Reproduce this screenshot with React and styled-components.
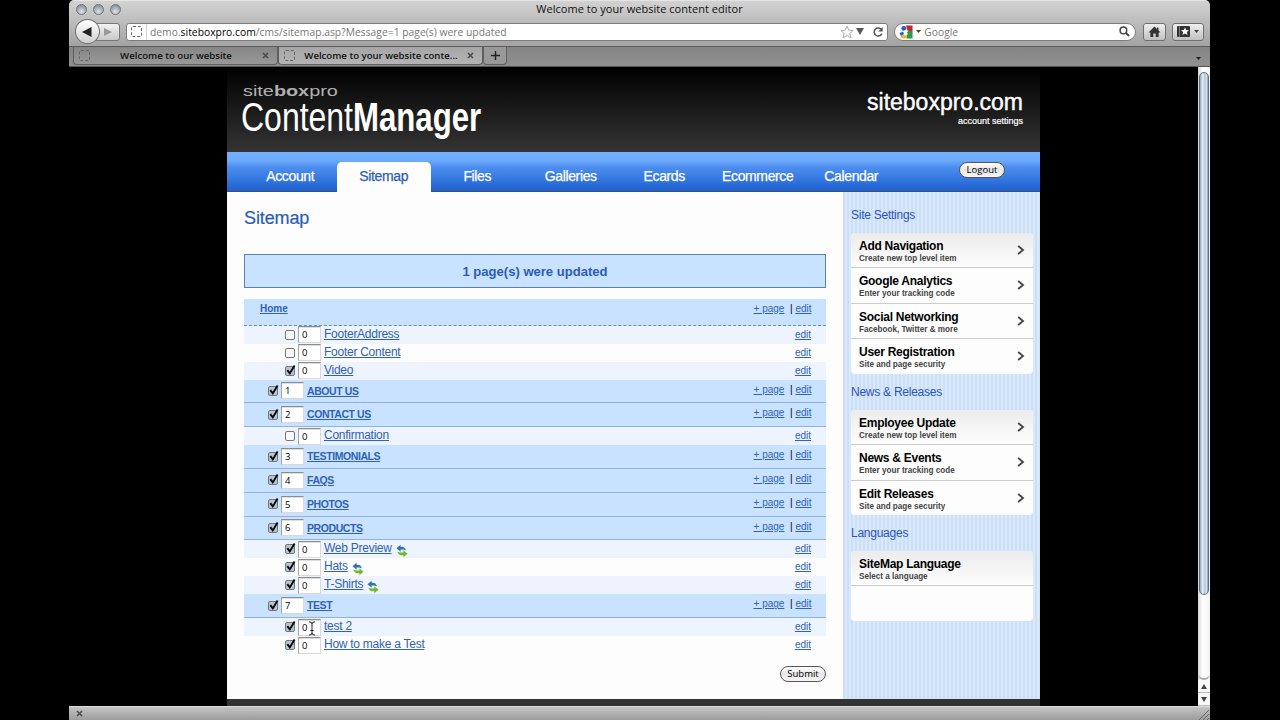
import React from "react"
import styled, { createGlobalStyle, css } from "styled-components"

const GlobalStyle = createGlobalStyle`
  * {
    box-sizing: border-box;
  }
  body {
    margin: 0;
    background: #000;
    overflow: hidden;
    font-family: "Liberation Sans", Arial, sans-serif;
  }
`

const lucida = css`
  font-family: "Open Sans", "Noto Sans", sans-serif;
`

/* ---------- browser window ---------- */

const Window = styled.div`
  width: 1141px;
  height: 720px;
  margin-left: 69px;
  display: flex;
  flex-direction: column;
  overflow: hidden;
  border-radius: 5px 5px 0 0;
  background: #000;
`

const Chrome = styled.div`
  height: 47px;
  flex: none;
  border-top: 1px solid #e4e4e4;
  background: linear-gradient(#d2d2d2, #a3a3a3);
  border-bottom: 1px solid #5c5c5c;
`

const TitleBar = styled.div`
  height: 16px;
  display: grid;
  grid-template-columns: 60px 1fr 60px;
  align-items: center;
`

const Lights = styled.div`
  display: flex;
  gap: 6px;
  padding-left: 7px;
`

const Light = styled.span`
  width: 11px;
  height: 11px;
  border-radius: 50%;
  border: 1px solid #6f747b;
  background: radial-gradient(circle at 50% 75%, #dfe3e8, #8b929b 80%);
`

const Title = styled.div`
  ${lucida}
  text-align: center;
  font-size: 11px;
  line-height: 16px;
  letter-spacing: 0.03px;
  color: #111;
`

const Toolbar = styled.div`
  height: 28px;
  padding: 1px 6px 0 6px;
  display: flex;
  align-items: center;
`

const BackButton = styled.div`
  width: 25px;
  height: 25px;
  border-radius: 50%;
  border: 1px solid #6b6b6b;
  background: linear-gradient(#fff, #cfcfcf);
  display: flex;
  align-items: center;
  justify-content: center;
  z-index: 1;
`

const ForwardButton = styled.div`
  width: 24px;
  height: 18px;
  margin-left: -4px;
  border: 1px solid #777;
  border-radius: 0 3px 3px 0;
  background: linear-gradient(#f2f2f2, #c8c8c8);
  display: flex;
  align-items: center;
  justify-content: center;
`

const Field = styled.div`
  height: 18px;
  display: flex;
  align-items: center;
  background: #fff;
  border: 1px solid #7d7d7d;
  ${lucida}
  font-size: 10.3px;
  color: #777;
`

const UrlField = styled(Field)`
  width: 763px;
  margin-left: 6px;
  border-radius: 3px;
`

const SiteIcon = styled.div`
  width: 20px;
  height: 16px;
  display: flex;
  align-items: center;
  justify-content: center;
  border-right: 1px solid #d5d5d5;
`

const Dashed = styled.span`
  width: 11px;
  height: 11px;
  border: 1px dashed #666;
  border-radius: 2px;
`

const Url = styled.div`
  flex: 1;
  padding-left: 3px;
  letter-spacing: 0.02px;
  white-space: nowrap;
  b {
    font-weight: 400;
    color: #000;
  }
`

const UrlIcons = styled.div`
  display: flex;
  align-items: center;
  padding-right: 3px;
`

const SearchField = styled(Field)`
  width: 242px;
  margin-left: 6px;
  border-radius: 9px;
  padding: 0 5px 0 4px;
  span {
    flex: 1;
    padding-left: 3px;
  }
`

const ToolButton = styled.div`
  width: ${(p) => p.$w}px;
  height: 18px;
  margin-left: ${(p) => p.$ml}px;
  border: 1px solid #707070;
  border-radius: 3px;
  background: linear-gradient(#f0f0f0, #c0c0c0);
  display: flex;
  align-items: center;
  justify-content: center;
  gap: 4px;
`

const TabStrip = styled.div`
  height: 20px;
  flex: none;
  display: flex;
  background: linear-gradient(#858585, #8f8f8f);
  border-bottom: 1px solid #555;
  padding-left: 4px;
`

const Tab = styled.div`
  width: 205px;
  height: 18px;
  display: flex;
  align-items: center;
  padding: 0 8px 0 5px;
  border: 1px solid #5f5f5f;
  border-top: none;
  border-radius: 0 0 4px 4px;
  background: ${(p) =>
    p.$active ? "linear-gradient(#a6a6a6, #b4b4b4)" : "linear-gradient(#868686, #989898)"};
`

const TabLabel = styled.div`
  ${lucida}
  flex: 1;
  text-align: center;
  white-space: nowrap;
  font-size: 9.6px;
  font-weight: 600;
  color: #111;
`

const NewTab = styled.div`
  width: 24px;
  height: 18px;
  border: 1px solid #5f5f5f;
  border-top: none;
  border-radius: 0 0 4px 4px;
  background: #999;
  display: flex;
  align-items: center;
  justify-content: center;
`

const TabMenu = styled.div`
  margin-left: auto;
  padding: 8px 9px 0 0;
  line-height: 0;
`

const Viewport = styled.div`
  height: 639px;
  flex: none;
  display: flex;
  justify-content: space-between;
`

const StatusBar = styled.div`
  height: 14px;
  flex: none;
  display: flex;
  align-items: center;
  justify-content: space-between;
  padding-left: 7px;
  border-top: 1px solid #dcdcdc;
  background: linear-gradient(#c4c4c4, #9c9c9c);
`

/* ---------- scrollbar ---------- */

const Scrollbar = styled.div`
  width: 12px;
  display: flex;
  flex-direction: column;
  background: linear-gradient(90deg, #d9d9d9, #fff 40%, #f2f2f2);
  padding-top: 5px;
`

const Thumb = styled.div`
  height: 523px;
  margin: 0 1px;
  border-radius: 5px;
  border: 1px solid #5d6f82;
  background: linear-gradient(90deg, #8fa3b8, #e6f0f8 35%, #b4c6d8 60%, #d5e3ef 80%, #8799ab);
`

const TrackEnd = styled.div`
  flex: 1;
  border-bottom: 2px solid #aaa;
  border-radius: 0 0 6px 6px;
`

const ArrowBox = styled.div`
  height: 13px;
  background: #f7f7f7;
  border-bottom: 1px solid #bbb;
  display: flex;
  align-items: center;
  justify-content: center;
`

/* ---------- page ---------- */

const Page = styled.div`
  width: 813px;
  margin-left: 158px;
  display: flex;
  flex-direction: column;
  background: #333;
`

const Header = styled.header`
  height: 85px;
  flex: none;
  display: flex;
  justify-content: space-between;
  padding: 15px 17px 0 14px;
  background: linear-gradient(#000, #343434);
  color: #fff;
`

const Brand = styled.div`
  font-size: 15.5px;
  line-height: 18px;
  height: 16px;
  width: 76px;
  margin-left: 2px;
  color: #b0b0b0;
  white-space: nowrap;
  transform: scaleX(1.28);
  transform-origin: left;
`

const Product = styled.div`
  display: flex;
  height: 40px;
  line-height: 39px;
  font-size: 41px;
`

const Squeezed = styled.span`
  width: ${(p) => p.$w}px;
  font-weight: ${(p) => p.$weight};
  white-space: nowrap;
  transform: scaleX(${(p) => p.$scale});
  transform-origin: left;
`

const Site = styled.div`
  text-align: right;
  padding-top: 7px;
`

const SiteName = styled.div`
  font-size: 23px;
  line-height: 26px;
  -webkit-text-stroke: 0.4px #fff;
`

const SiteLink = styled.div`
  font-size: 9px;
  line-height: 12px;
  -webkit-text-stroke: 0.2px #fff;
`

const Nav = styled.nav`
  height: 40px;
  flex: none;
  display: flex;
  align-items: flex-end;
  padding-left: 16.5px;
  border-bottom: 1px solid #44506a;
  background: linear-gradient(#74b0ff, #6eaafc 22%, #4d8ff0 38%, #1d60cf);
`

const NavItem = styled.a`
  width: 93.5px;
  height: 30px;
  margin-bottom: -1px;
  line-height: 29px;
  text-align: center;
  font-size: 14px;
  letter-spacing: -0.37px;
  border-radius: 5px 5px 0 0;
  color: ${(p) => (p.$active ? "#2a5db8" : "#fff")};
  background: ${(p) => (p.$active ? "#fdfdfd" : "none")};
  -webkit-text-stroke: 0.25px;
`

const PillButton = styled.button`
  ${lucida}
  width: 46px;
  height: 16px;
  padding: 0 0 1px;
  font-size: 9.5px;
  line-height: 12px;
  color: #000;
  border: 1px solid #555;
  border-radius: 8px;
  background: linear-gradient(#fff, #e6e6e6 50%, #f7f7f7);
`

const Logout = styled(PillButton)`
  margin: 0 35px 13px auto;
`

const Columns = styled.div`
  height: 507px;
  display: flex;
`

const Main = styled.main`
  width: 616px;
  padding: 15px 17px 0 17px;
  background: #fdfdfd;
`

const PageTitle = styled.h1`
  margin: 0;
  font-size: 18px;
  letter-spacing: -0.12px;
  line-height: 22px;
  font-weight: 400;
  color: #2a5db8;
  -webkit-text-stroke: 0.2px;
`

const Message = styled.div`
  height: 34px;
  margin: 25px 0 11px;
  line-height: 33px;
  text-align: center;
  font-size: 13.05px;
  font-weight: 700;
  color: #2a5db8;
  background: #c9e2ff;
  border: 1px solid #5a82b4;
`

const Row = styled.div`
  display: flex;
  font-size: 10px;
  ${(p) =>
    p.$kind === "home" &&
    css`
      height: 26.6px;
      padding: 1px 14.5px 0 16px;
      line-height: 17px;
      background: #c9e2ff;
      border-bottom: 1px dashed #6b8fb8;
    `}
  ${(p) =>
    p.$kind === "group" &&
    css`
      height: 23.8px;
      padding: 0 14.5px 0 23px;
      line-height: 23px;
      background: #c9e2ff;
      border-bottom: 1px solid #8db3e0;
    `}
  ${(p) =>
    p.$kind === "sub" &&
    css`
      height: 18px;
      padding: 0 15px 0 40px;
      line-height: 17px;
      background: ${p.$striped ? "#eef4fd" : "#fdfdfd"};
    `}
`

const Controls = styled.div`
  display: flex;
  align-items: center;
  width: 40px;
`

const Order = styled.div`
  ${lucida}
  width: 23px;
  height: 17px;
  padding-left: 3px;
  line-height: 15px;
  font-size: 9.5px;
  color: #000;
  background: #fff;
  border: 1px solid #d9d9d9;
  border-top-color: #8c8c8c;
  border-left-color: #a5a5a5;
  box-shadow: inset 0 1px 0 #dedede;
`

const Link = styled.a`
  color: #2f62b5;
  text-decoration: underline;
  white-space: nowrap;
`

const GroupName = styled(Link)`
  font-size: 10.5px;
  letter-spacing: -0.42px;
  font-weight: 700;
`

const HomeName = styled(Link)`
  font-size: 10px;
  font-weight: 700;
`

const SubName = styled(Link)`
  font-size: 12px;
  letter-spacing: -0.26px;
`

const Synced = styled.span`
  display: flex;
  align-items: center;
  padding: 3px 0 0 4px;
`

const Actions = styled.div`
  margin-left: auto;
  line-height: ${(p) => p.$lh}px;
  white-space: pre;
`

const SubmitRow = styled.div`
  display: flex;
  justify-content: flex-end;
  padding-top: 12px;
`

const Aside = styled.aside`
  width: 197px;
  padding: 0 7px 0 8px;
  background: repeating-linear-gradient(90deg, #cbdff6 0 2px, #d9e8fa 2px 4px);
`

const AsideTitle = styled.h2`
  margin: 0;
  padding-top: ${(p) => p.$pt}px;
  height: ${(p) => p.$h}px;
  line-height: 14px;
  font-size: 12px;
  letter-spacing: -0.25px;
  font-weight: 400;
  color: #2a55c0;
`

const Card = styled.div`
  height: ${(p) => p.$h}px;
  border-radius: 4px;
  overflow: hidden;
  background: #fdfdfd;
`

const CardItem = styled.div`
  height: 35.25px;
  display: flex;
  align-items: center;
  justify-content: space-between;
  padding: 0 8px;
  border-bottom: 1px solid #ccc;
  &:first-child {
    background: linear-gradient(#ececec, #fdfdfd);
  }
  &:nth-child(${(p) => p.$last}) {
    border-bottom: none;
  }
`

const ItemText = styled.div`
  padding-top: 4px;
`

const ItemTitle = styled.div`
  font-size: 12px;
  letter-spacing: -0.27px;
  line-height: 13px;
  font-weight: 700;
  color: #000;
`

const ItemNote = styled.div`
  font-size: 8.15px;
  line-height: 11px;
  font-weight: 700;
  color: #444;
`

const TextCursor = styled.svg`
  position: absolute;
  left: 308px;
  top: 621px;
`

/* ---------- drawings ---------- */

const Check = ({ checked }) => (
  <svg width="14" height="14" viewBox="0 0 14 14">
    <rect
      x="1.5"
      y="2.5"
      width="9"
      height="9"
      rx="1.5"
      fill={checked ? "#b9c4d2" : "#fafafa"}
      stroke="#777"
    />
    {checked && (
      <path d="M3.3 6.2 L5.8 9.4 L10.6 1.6" fill="none" stroke="#0a0a0a" strokeWidth="1.9" />
    )}
  </svg>
)

const Sync = () => (
  <svg width="12" height="14" viewBox="0 0 12 14">
    <path d="M0.5 4.3 L4.6 0.8 V2.8 C8 2.6 9.6 3.8 9.8 6.6 C8.4 5.6 7 5.4 4.6 5.6 V7.8 Z" fill="#2c76ac" />
    <path d="M11.5 9.7 L7.4 13.2 V11.3 C4 11.5 2 10.3 1.4 7.4 C3.2 8.5 5 8.6 7.4 8.4 V6.3 Z" fill="#74b62c" />
  </svg>
)

const Cross = () => (
  <svg width="7" height="7" viewBox="0 0 7 7">
    <path d="M1 1 L6 6 M6 1 L1 6" stroke="#4c4c4c" strokeWidth="1.6" />
  </svg>
)

const Triangle = ({ w = 6, h = 4, color = "#444" }) => (
  <svg width={w} height={h} viewBox="0 0 6 4" preserveAspectRatio="none">
    <path d="M0 0 H6 L3 4 Z" fill={color} />
  </svg>
)

const Chevron = () => (
  <svg width="8" height="10" viewBox="0 0 8 10">
    <path d="M1.2 1 L6 5 L1.2 9" fill="none" stroke="#444" strokeWidth="1.8" />
  </svg>
)

const Star = () => (
  <svg width="14" height="14" viewBox="0 0 14 14">
    <path
      d="M7 1 L8.8 5.1 L13.2 5.5 L9.9 8.4 L10.9 12.8 L7 10.5 L3.1 12.8 L4.1 8.4 L0.8 5.5 L5.2 5.1 Z"
      fill="#fafafa"
      stroke="#aaa"
    />
  </svg>
)

const Reload = () => (
  <svg width="12" height="12" viewBox="0 0 12 12">
    <path d="M9.4 3.6 A4 4 0 1 0 9.8 7.6" fill="none" stroke="#555" strokeWidth="1.5" />
    <path d="M10.7 1 V5.4 H6.3 Z" fill="#555" />
  </svg>
)

const SearchLogo = () => (
  <svg width="14" height="14" viewBox="0 0 14 14">
    <rect x="1" y="1" width="13" height="12" rx="1" fill="#eef2fb" />
    <path d="M7 0.5 H13.5 V6 H8.5 Z" fill="#c9252b" />
    <path d="M8 6 H13.5 V13.5 H7.5 Z" fill="#2f9a44" />
    <path d="M0.5 8 L4 6.8 L5 9 L2 11 Z" fill="#2b5fc4" />
    <circle cx="4.8" cy="3.4" r="2.4" fill="#2b5fc4" />
    <ellipse cx="4.8" cy="11.8" rx="3" ry="1.7" fill="#f3b52d" />
    <path d="M5 5.5 L9.5 5.5 L8 7.5 L9 9.5 L6.5 9.5 Z" fill="#fff" />
  </svg>
)

const Magnifier = () => (
  <svg width="11" height="11" viewBox="0 0 11 11">
    <circle cx="4.4" cy="4.4" r="3.3" fill="none" stroke="#444" strokeWidth="1.5" />
    <path d="M6.9 6.9 L10 10" stroke="#444" strokeWidth="1.9" />
  </svg>
)

const House = () => (
  <svg width="13" height="12" viewBox="0 0 13 12">
    <path d="M6.5 0.5 L0.5 6.4 H2.4 V11 H5.3 V7.5 H7.7 V11 H10.6 V6.4 H12.5 L10.4 4.3 V1.5 H9 V2.9 Z" fill="#333" />
  </svg>
)

const Bookmark = () => (
  <svg width="13" height="11" viewBox="0 0 13 11">
    <rect width="13" height="11" rx="1" fill="#333" />
    <path d="M2.5 0 V11" stroke="#777" />
    <path
      d="M8 1.4 L9.2 4 L12 4.3 L9.9 6.1 L10.5 9 L8 7.5 L5.5 9 L6.1 6.1 L4 4.3 L6.8 4 Z"
      fill="#fff"
    />
  </svg>
)

/* ---------- data ---------- */

const navItems = ["Account", "Sitemap", "Files", "Galleries", "Ecards", "Ecommerce", "Calendar"]

const rows = [
  { kind: "sub", name: "FooterAddress", order: 0, striped: true },
  { kind: "sub", name: "Footer Content", order: 0 },
  { kind: "sub", name: "Video", order: 0, checked: true, striped: true },
  { kind: "group", name: "ABOUT US", order: 1 },
  { kind: "group", name: "CONTACT US", order: 2 },
  { kind: "sub", name: "Confirmation", order: 0, striped: true },
  { kind: "group", name: "TESTIMONIALS", order: 3 },
  { kind: "group", name: "FAQS", order: 4 },
  { kind: "group", name: "PHOTOS", order: 5 },
  { kind: "group", name: "PRODUCTS", order: 6 },
  { kind: "sub", name: "Web Preview", order: 0, checked: true, synced: true, striped: true },
  { kind: "sub", name: "Hats", order: 0, checked: true, synced: true },
  { kind: "sub", name: "T-Shirts", order: 0, checked: true, synced: true, striped: true },
  { kind: "group", name: "TEST", order: 7 },
  { kind: "sub", name: "test 2", order: 0, checked: true, striped: true },
  { kind: "sub", name: "How to make a Test", order: 0, checked: true },
]

const settings = [
  ["Add Navigation", "Create new top level item"],
  ["Google Analytics", "Enter your tracking code"],
  ["Social Networking", "Facebook, Twitter & more"],
  ["User Registration", "Site and page security"],
]

const news = [
  ["Employee Update", "Create new top level item"],
  ["News & Events", "Enter your tracking code"],
  ["Edit Releases", "Site and page security"],
]

const PageActions = ({ lh }) => (
  <Actions $lh={lh}>
    <Link>+ page</Link>
    {"  | "}
    <Link>edit</Link>
  </Actions>
)

const SitemapRow = ({ kind, name, order, checked, synced, striped }) => (
  <Row $kind={kind} $striped={striped}>
    <Controls>
      <Check checked={kind === "group" || checked} />
      <Order>{order}</Order>
    </Controls>
    {kind === "group" ? <GroupName>{name}</GroupName> : <SubName>{name}</SubName>}
    {synced && (
      <Synced>
        <Sync />
      </Synced>
    )}
    {kind === "group" ? (
      <PageActions lh={19} />
    ) : (
      <Actions $lh={18.4}>
        <Link>edit</Link>
      </Actions>
    )}
  </Row>
)

const CardList = ({ items, height }) => (
  <Card $h={height}>
    {items.map(([title, note]) => (
      <CardItem key={title} $last={items.length}>
        <ItemText>
          <ItemTitle>{title}</ItemTitle>
          <ItemNote>{note}</ItemNote>
        </ItemText>
        <Chevron />
      </CardItem>
    ))}
  </Card>
)

const BrowserChrome = () => (
  <>
    <Chrome>
      <TitleBar>
        <Lights>
          <Light />
          <Light />
          <Light />
        </Lights>
        <Title>Welcome to your website content editor</Title>
      </TitleBar>
      <Toolbar>
        <BackButton>
          <svg width="11" height="10" viewBox="0 0 11 10">
            <path d="M0 5 L9.5 0 V10 Z" fill="#222" />
          </svg>
        </BackButton>
        <ForwardButton>
          <svg width="8" height="8" viewBox="0 0 8 8">
            <path d="M8 4 L0 0 V8 Z" fill="#999" />
          </svg>
        </ForwardButton>
        <UrlField>
          <SiteIcon>
            <Dashed />
          </SiteIcon>
          <Url>
            demo.<b>siteboxpro.com</b>/cms/sitemap.asp?Message=1 page(s) were updated
          </Url>
          <UrlIcons>
            <Star />
            <svg width="2" height="1" />
            <Triangle w={8} h={7} color="#555" />
            <svg width="8" height="1" />
            <Reload />
          </UrlIcons>
        </UrlField>
        <SearchField>
          <SearchLogo />
          <svg width="3" height="1" />
          <Triangle w={5} h={3} />
          <span>Google</span>
          <Magnifier />
        </SearchField>
        <ToolButton $w={23} $ml={7}>
          <House />
        </ToolButton>
        <ToolButton $w={32} $ml={6}>
          <Bookmark />
          <Triangle w={5} h={3} />
        </ToolButton>
      </Toolbar>
    </Chrome>
    <TabStrip>
      <Tab>
        <Dashed />
        <TabLabel>Welcome to our website</TabLabel>
        <Cross />
      </Tab>
      <Tab $active>
        <Dashed />
        <TabLabel>Welcome to your website conte...</TabLabel>
        <Cross />
      </Tab>
      <NewTab>
        <svg width="9" height="9" viewBox="0 0 9 9">
          <path d="M4.5 0 V9 M0 4.5 H9" stroke="#222" strokeWidth="1.4" />
        </svg>
      </NewTab>
      <TabMenu>
        <Triangle w={5} h={3} color="#222" />
      </TabMenu>
    </TabStrip>
  </>
)

const App = () => {
  return (
    <>
      <GlobalStyle />
      <Window>
        <BrowserChrome />
        <Viewport>
          <Page>
            <Header>
              <div>
                <Brand>
                  site<b>box</b>pro
                </Brand>
                <Product>
                  <Squeezed $w={112} $scale={0.78} $weight={400}>
                    Content
                  </Squeezed>
                  <Squeezed $w={128} $scale={0.76} $weight={700}>
                    Manager
                  </Squeezed>
                </Product>
              </div>
              <Site>
                <SiteName>siteboxpro.com</SiteName>
                <SiteLink>account settings</SiteLink>
              </Site>
            </Header>
            <Nav>
              {navItems.map((item) => (
                <NavItem key={item} $active={item === "Sitemap"}>
                  {item}
                </NavItem>
              ))}
              <Logout>Logout</Logout>
            </Nav>
            <Columns>
              <Main>
                <PageTitle>Sitemap</PageTitle>
                <Message>1 page(s) were updated</Message>
                <Row $kind="home">
                  <HomeName>Home</HomeName>
                  <PageActions lh={17} />
                </Row>
                {rows.map((row) => (
                  <SitemapRow key={row.name} {...row} />
                ))}
                <SubmitRow>
                  <PillButton>Submit</PillButton>
                </SubmitRow>
              </Main>
              <Aside>
                <AsideTitle $pt={16} $h={41}>
                  Site Settings
                </AsideTitle>
                <CardList items={settings} height={141} />
                <AsideTitle $pt={11} $h={36}>
                  News &amp; Releases
                </AsideTitle>
                <CardList items={news} height={105} />
                <AsideTitle $pt={11} $h={36}>
                  Languages
                </AsideTitle>
                <Card $h={70}>
                  <CardItem>
                    <ItemText>
                      <ItemTitle>SiteMap Language</ItemTitle>
                      <ItemNote>Select a language</ItemNote>
                    </ItemText>
                  </CardItem>
                </Card>
              </Aside>
            </Columns>
          </Page>
          <Scrollbar>
            <Thumb />
            <TrackEnd />
            <ArrowBox>
              <svg width="6" height="5" viewBox="0 0 6 5">
                <path d="M3 0 L6 5 H0 Z" fill="#444" />
              </svg>
            </ArrowBox>
            <ArrowBox>
              <Triangle w={6} h={5} />
            </ArrowBox>
          </Scrollbar>
        </Viewport>
        <StatusBar>
          <Cross />
          <svg width="12" height="12" viewBox="0 0 12 12">
            <path d="M1 12 L11 2 M5 12 L11 6 M9 12 L11 10" stroke="#666" />
          </svg>
        </StatusBar>
      </Window>
      <TextCursor width="8" height="15" viewBox="0 0 8 15">
        <path
          d="M1 0.8 Q4 0.8 4 3 V12 Q4 14.2 1 14.2 M7 0.8 Q4 0.8 4 3 M4 12 Q4 14.2 7 14.2 M2.3 9.5 H5.7"
          fill="none"
          stroke="#222"
        />
      </TextCursor>
    </>
  )
}

export default App
